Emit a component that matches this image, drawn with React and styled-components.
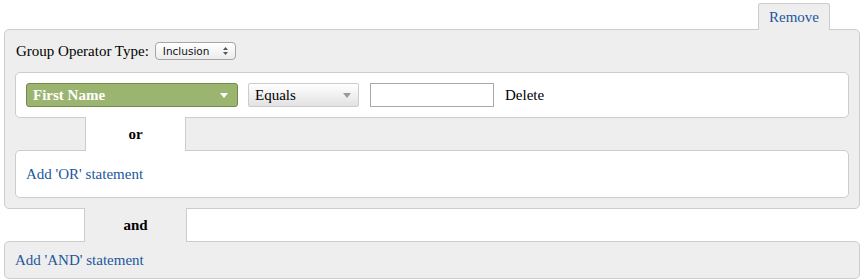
import React from "react";
import styled, { createGlobalStyle } from "styled-components";

const serif = `"Liberation Serif", "DejaVu Serif", serif`;

const Global = createGlobalStyle`
  html, body { margin: 0; padding: 0; background: #fff; }
  body { font-family: ${serif}; font-size: 15px; color: #000; }
`;

const Page = styled.div`
  padding: 3px 5px 0 4px;
  font-family: ${serif};
  font-size: 15px;
  color: #000;
`;

const TabBar = styled.div`
  display: flex;
  justify-content: flex-end;
  padding-right: 30px;
`;

const RemoveTab = styled.a`
  position: relative;
  z-index: 1;
  display: flex;
  align-items: center;
  justify-content: center;
  width: 70px;
  height: 26px;
  margin-bottom: -1px;
  background: #eeeeee;
  border: 1px solid #cccccc;
  border-bottom: none;
  border-radius: 3px 3px 0 0;
  color: #22579b;
  font-family: ${serif};
  font-size: 15px;
  text-decoration: none;
`;

const Box = styled.div`
  border: 1px solid #cccccc;
  border-radius: 5px;
  background: ${(p) => (p.$white ? "#ffffff" : "#eeeeee")};
  padding: ${(p) => p.$pad};
`;

const HeaderRow = styled.div`
  display: flex;
  align-items: center;
  gap: 6px;
  height: 22px;
  margin-bottom: 10px;
  padding-left: 1px;
`;

const MiniSelect = styled.div`
  display: flex;
  align-items: center;
  justify-content: space-between;
  box-sizing: border-box;
  width: 81px;
  height: 18px;
  padding: 0 7px 0 7px;
  border: 1px solid #a5a5a5;
  border-radius: 4px;
  background: linear-gradient(#ffffff, #ececec);
  font-family: "DejaVu Sans", sans-serif;
  font-size: 10.5px;
  color: #111;
`;

const ConditionRow = styled.div`
  display: flex;
  align-items: center;
  height: 24px;
`;

const FieldSelect = styled.div`
  display: flex;
  align-items: center;
  justify-content: space-between;
  box-sizing: border-box;
  width: 212px;
  height: 24px;
  padding: 0 9px 0 6px;
  background: #9bb571;
  border: 1px solid #718c4b;
  border-radius: 3px;
  color: #ffffff;
  font-weight: bold;
  font-size: 15px;
  margin-right: 10px;
`;

const OpSelect = styled.div`
  display: flex;
  align-items: center;
  justify-content: space-between;
  box-sizing: border-box;
  width: 111px;
  height: 24px;
  padding: 0 7px 0 6px;
  background: linear-gradient(#ffffff, #e2e2e2);
  border: 1px solid #cccccc;
  border-radius: 2px;
  margin-right: 11px;
`;

const TextInput = styled.div`
  box-sizing: border-box;
  width: 124px;
  height: 24px;
  border: 1px solid #a9a9a9;
  background: #fff;
  margin-right: 11px;
`;

const Connector = styled.div`
  position: relative;
  z-index: 1;
  box-sizing: border-box;
  display: flex;
  align-items: center;
  justify-content: center;
  width: ${(p) => p.$w}px;
  height: 34px;
  margin: -1px 0 -1px ${(p) => p.$left}px;
  background: ${(p) => (p.$white ? "#ffffff" : "#eeeeee")};
  border-left: 1px solid #cccccc;
  border-right: 1px solid #cccccc;
  font-weight: bold;
  font-size: 15px;
`;

const LinkText = styled.a`
  display: block;
  line-height: 22px;
  color: #22579b;
  font-family: ${serif};
  font-size: 15px;
  text-decoration: none;
`;

const Caret = ({ color }) => (
  <svg width="8" height="5" viewBox="0 0 8 5">
    <path d="M0 0 L8 0 L4 5 Z" fill={color} />
  </svg>
);

const UpDown = () => (
  <svg width="5" height="8" viewBox="0 0 5 8">
    <path d="M0 3 L2.5 0 L5 3 Z M0 5 L5 5 L2.5 8 Z" fill="#555" />
  </svg>
);

export default function App() {
  return (
    <Page>
      <Global />
      <TabBar>
        <RemoveTab href="#">Remove</RemoveTab>
      </TabBar>
      <Box $pad="10px 10px 10px 10px">
        <HeaderRow>
          <span>Group Operator Type:</span>
          <MiniSelect>
            <span>Inclusion</span>
            <UpDown />
          </MiniSelect>
        </HeaderRow>
        <Box $white $pad="10px 10px">
          <ConditionRow>
            <FieldSelect>
              <span>First Name</span>
              <Caret color="#ffffff" />
            </FieldSelect>
            <OpSelect>
              <span>Equals</span>
              <Caret color="#999999" />
            </OpSelect>
            <TextInput />
            <span>Delete</span>
          </ConditionRow>
        </Box>
        <Connector $white $w={101} $left={70}>or</Connector>
        <Box $white $pad="12px 10px">
          <LinkText href="#">Add 'OR' statement</LinkText>
        </Box>
      </Box>
      <Connector $w={103} $left={80}>and</Connector>
      <Box $pad="7px 10px">
        <LinkText href="#">Add 'AND' statement</LinkText>
      </Box>
    </Page>
  );
}
